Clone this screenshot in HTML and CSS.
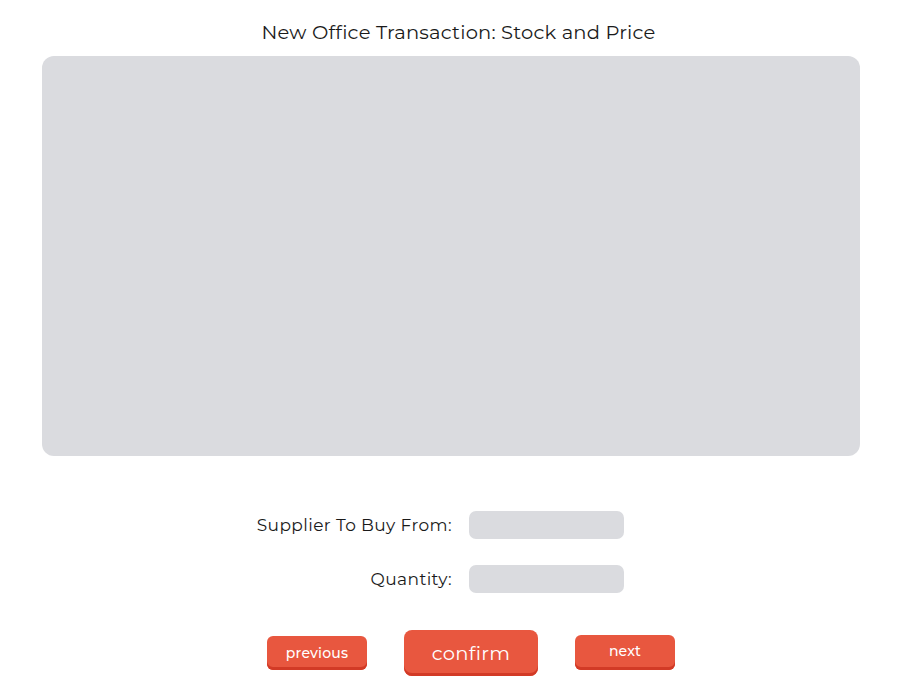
FILE: index.html
```html
<!DOCTYPE html>
<html>
<head>
<meta charset="utf-8">
<link rel="stylesheet" href="styles.css">
</head>
<body>
<div class="page">
  <h1 class="title">New Office Transaction: Stock and Price</h1>
  <div class="panel"></div>
  <div class="form">
    <label class="label">Supplier To Buy From:</label>
    <div class="field"></div>
    <label class="label">Quantity:</label>
    <div class="field"></div>
  </div>
  <div class="actions">
    <button class="btn btn-small">previous</button>
    <button class="btn btn-big">confirm</button>
    <button class="btn btn-small btn-next">next</button>
  </div>
</div>
</body>
</html>
```

FILE: styles.css
```css
html, body {
  margin: 0;
  padding: 0;
  background: #ffffff;
}
body {
  font-family: "Montserrat", "Lato", "Open Sans", sans-serif;
  color: #1a1a1a;
}
.page {
  width: 900px;
  height: 700px;
  display: flex;
  flex-direction: column;
}
.title {
  margin: 0;
  padding: 20px 0 12px 17px;
  height: 56px;
  box-sizing: border-box;
  font-size: 19.5px;
  font-weight: 400;
  line-height: 24px;
  text-align: center;
  letter-spacing: 0.2px;
}
.panel {
  margin-left: 42px;
  width: 818px;
  height: 400px;
  flex: none;
  background: #dadbdf;
  border-radius: 12px;
}
.form {
  margin-top: 55px;
  display: grid;
  grid-template-columns: 452px 155px;
  column-gap: 17px;
  row-gap: 26px;
  align-items: center;
}
.label {
  text-align: right;
  font-size: 17px;
  letter-spacing: 0.4px;
  line-height: 28px;
}
.field {
  height: 28px;
  background: #dadbdf;
  border-radius: 7px;
}
.actions {
  margin-top: 37px;
  padding-left: 267px;
  display: flex;
  align-items: center;
  gap: 37px;
}
.btn {
  border: none;
  background: #e8573f;
  color: #ffffff;
  font-family: inherit;
  font-weight: 500;
  padding: 0;
  box-shadow: inset 0 -3px 0 #d23a26;
  cursor: pointer;
}
.btn-small {
  width: 100px;
  height: 34px;
  border-radius: 6px;
  font-size: 14px;
  letter-spacing: 0.2px;
  padding-bottom: 1px;
}
.btn-next {
  height: 35px;
  margin-top: -1px;
  padding-bottom: 3px;
}
.btn-big {
  width: 134px;
  height: 46px;
  border-radius: 8px;
  font-size: 19.5px;
  font-weight: 400;
  letter-spacing: 0.3px;
  padding-bottom: 0;
}
```
